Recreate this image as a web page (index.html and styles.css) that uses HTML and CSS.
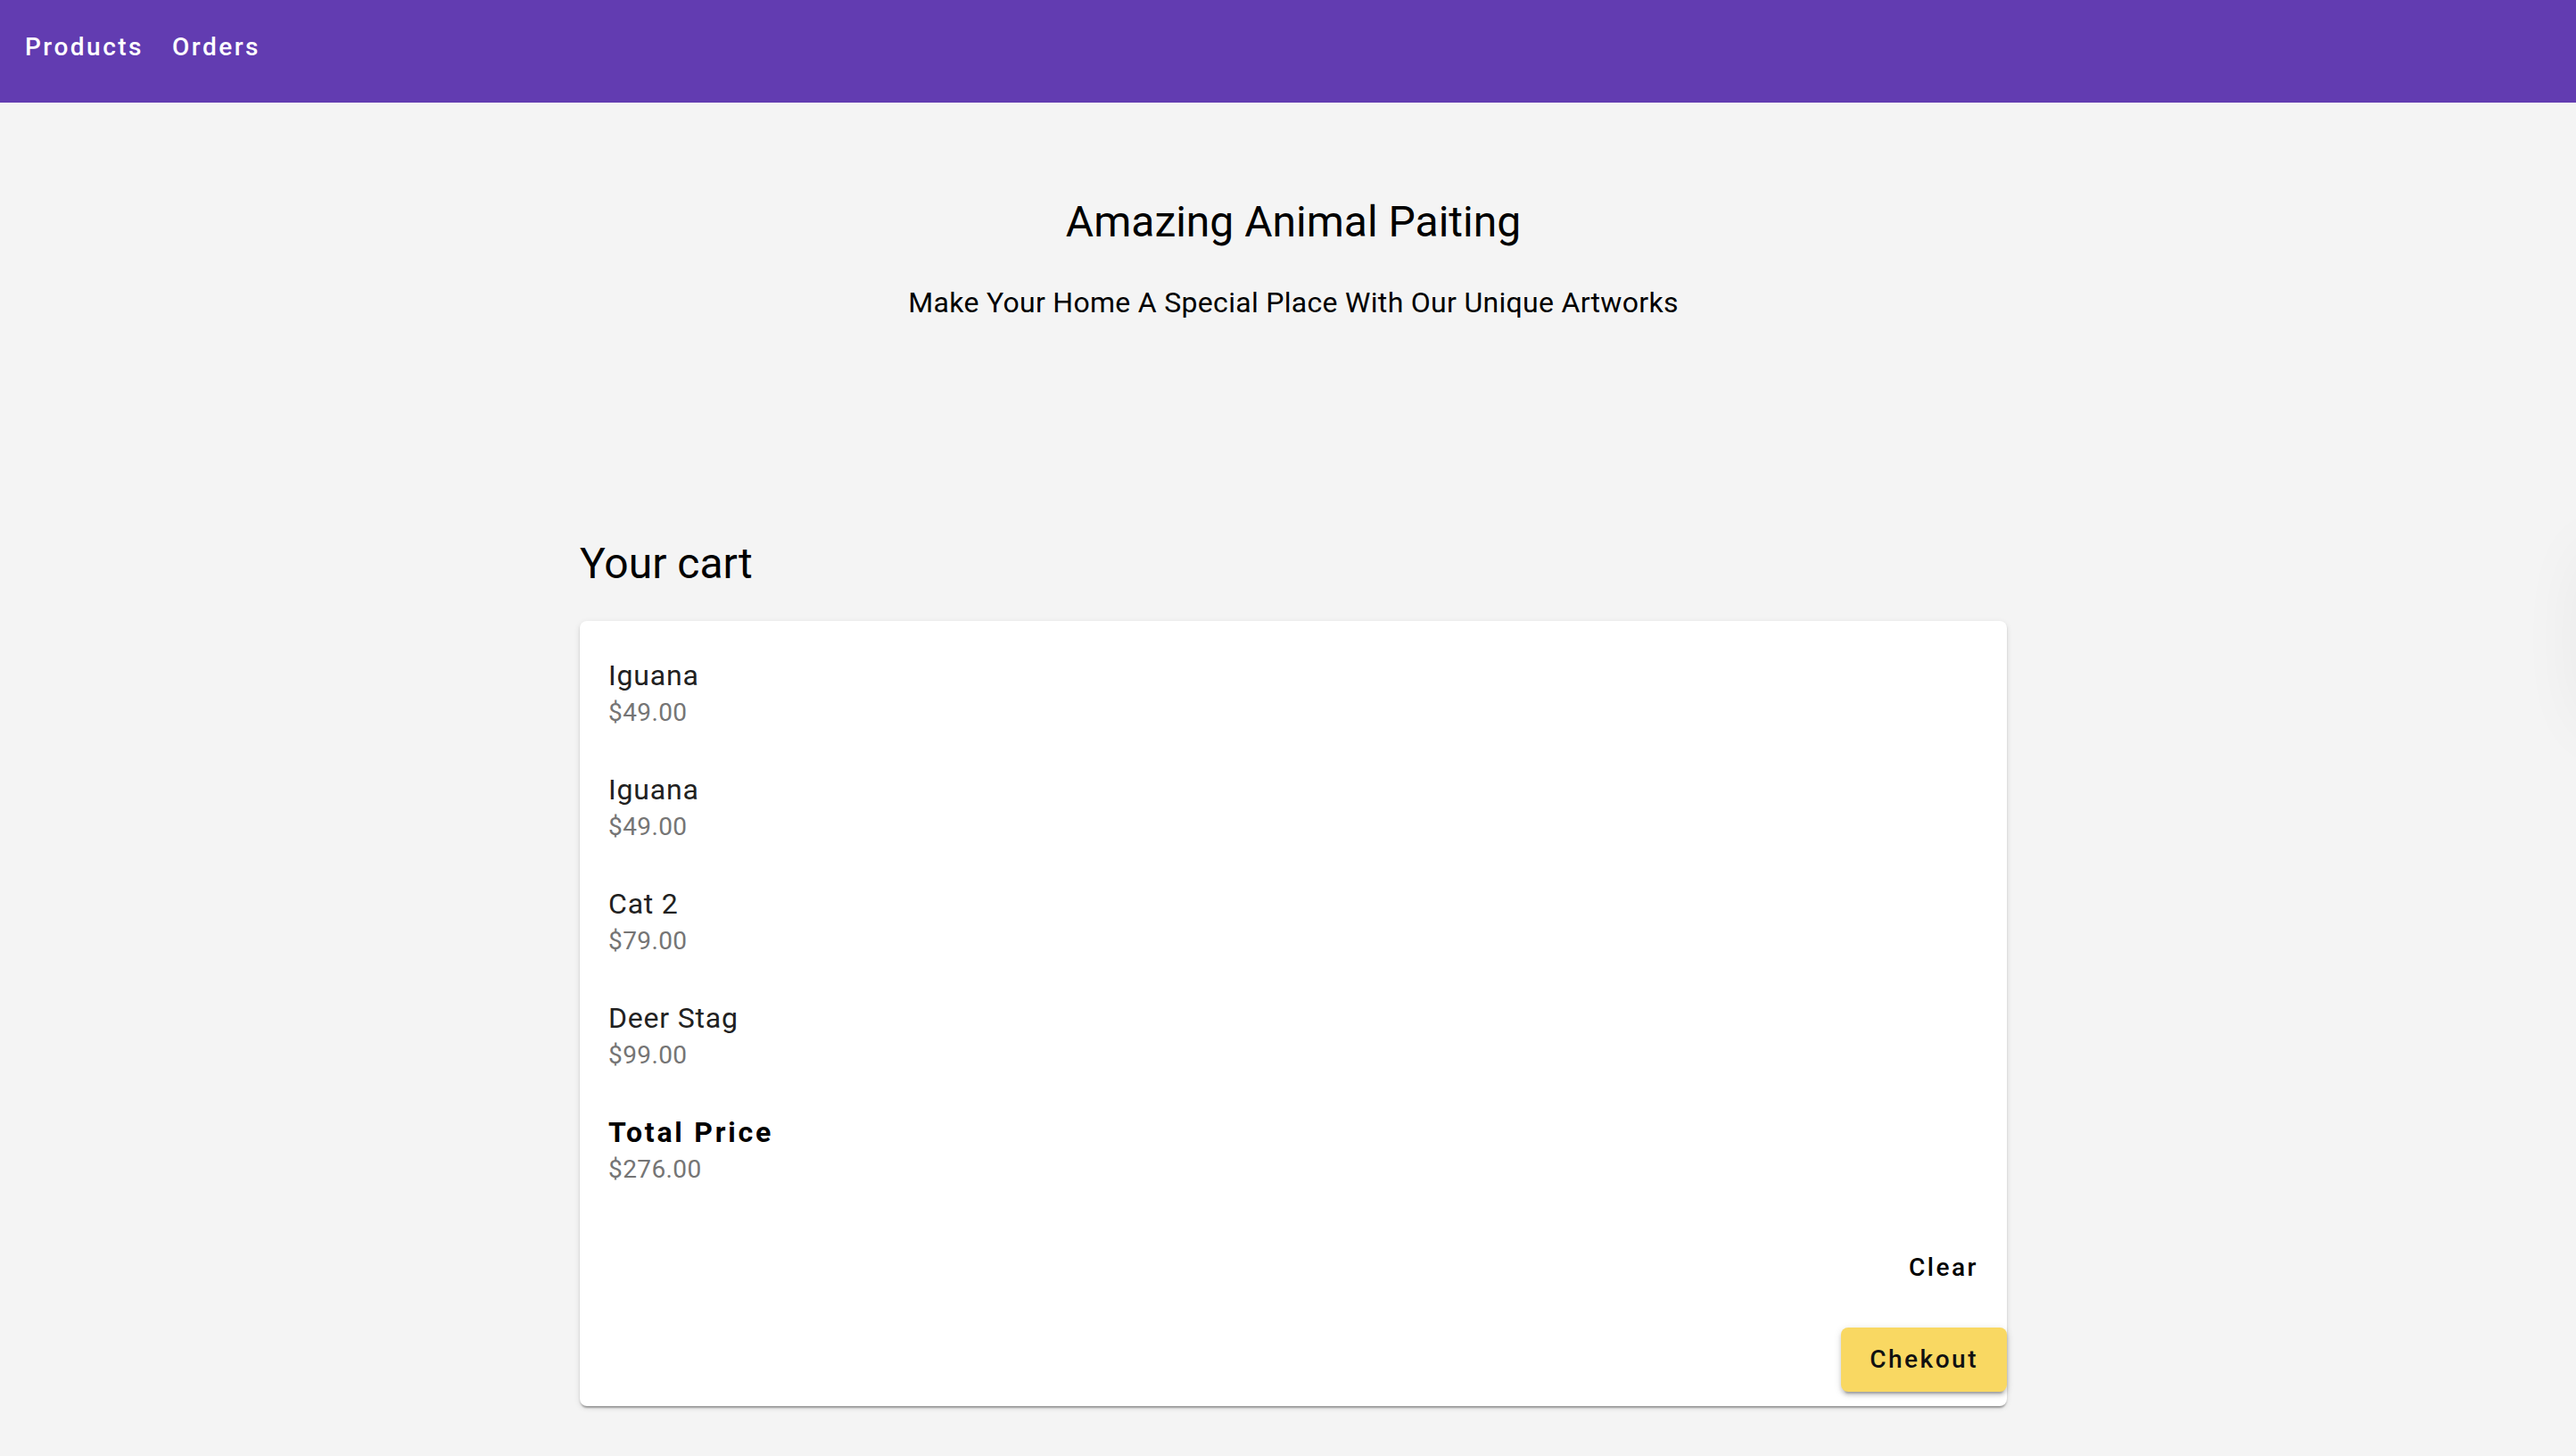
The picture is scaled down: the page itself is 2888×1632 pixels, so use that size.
FILE: index.html
```html
<!DOCTYPE html>
<html lang="en">
<head>
<meta charset="utf-8">
<title>Amazing Animal Paiting</title>
<link rel="stylesheet" href="styles.css">
</head>
<body>
  <header class="appbar">
    <nav class="nav">
      <a class="nav-btn" href="#">Products</a>
      <a class="nav-btn" href="#">Orders</a>
    </nav>
  </header>
  <main class="main">
    <section class="hero">
      <h1 class="hero-title">Amazing Animal Paiting</h1>
      <p class="hero-sub">Make Your Home A Special Place With Our Unique Artworks</p>
    </section>
    <section class="cart">
      <h2 class="cart-title">Your cart</h2>
      <div class="card">
        <ul class="items">
          <li class="item"><span class="item-name">Iguana</span><span class="item-price">$49.00</span></li>
          <li class="item"><span class="item-name">Iguana</span><span class="item-price">$49.00</span></li>
          <li class="item"><span class="item-name">Cat 2</span><span class="item-price">$79.00</span></li>
          <li class="item"><span class="item-name">Deer Stag</span><span class="item-price">$99.00</span></li>
          <li class="item"><span class="item-name total">Total Price</span><span class="item-price">$276.00</span></li>
        </ul>
        <div class="actions">
          <button class="btn btn-text">Clear</button>
          <button class="btn btn-primary">Chekout</button>
        </div>
      </div>
    </section>
  </main>
  <div class="edge-shadow"></div>
</body>
</html>
```

FILE: styles.css
```css
* { box-sizing: border-box; }
html, body { margin: 0; padding: 0; }
body {
  background: #f4f4f4;
  font-family: Roboto, "Liberation Sans", Arial, sans-serif;
  color: #000;
  min-height: 1632px;
  overflow: hidden;
}
.appbar {
  height: 115px;
  background: #623cb1;
  display: flex;
  align-items: center;
  padding: 0 0 9px 12px;
}
.nav { display: flex; gap: 0; }
.nav-btn {
  color: #fff;
  text-decoration: none;
  font-size: 28px;
  font-weight: 500;
  letter-spacing: 2.5px;
  line-height: 48px;
  padding: 0 16px;
}
.main {
  padding-left: 12px;
  display: flex;
  flex-direction: column;
  align-items: center;
}
.hero { padding-top: 102px; text-align: center; }
.hero-title {
  margin: 0;
  font-size: 48px;
  font-weight: 400;
  line-height: 64px;
}
.hero-sub {
  margin: 34px 0 0;
  font-size: 32px;
  line-height: 48px;
  letter-spacing: 0.3px;
}
.cart { width: 1600px; margin-top: 237px; }
.cart-title {
  margin: 0;
  font-size: 48px;
  font-weight: 400;
  line-height: 64px;
}
.card {
  margin-top: 32px;
  background: #fff;
  border-radius: 8px;
  box-shadow: 0 4px 2px -2px rgba(0,0,0,0.2), 0 2px 2px 0 rgba(0,0,0,0.14), 0 2px 6px 0 rgba(0,0,0,0.12);
  padding: 37px 0 16px 32px;
}
.items {
  list-style: none;
  margin: 0;
  padding: 0;
  display: flex;
  flex-direction: column;
  gap: 44px;
}
.item { display: flex; flex-direction: column; }
.item-name {
  font-size: 32px;
  line-height: 48px;
  color: #212121;
  letter-spacing: 0.8px;
}
.item-name.total {
  font-weight: 700;
  color: #000;
  letter-spacing: 2.8px;
}
.item-price {
  font-size: 28px;
  line-height: 36px;
  color: #757575;
  letter-spacing: 0.4px;
}
.actions {
  margin-top: 56px;
  display: flex;
  flex-direction: column;
  align-items: flex-end;
  gap: 31px;
}
.btn {
  font-family: Roboto, "Liberation Sans", Arial, sans-serif;
  font-size: 28px;
  font-weight: 500;
  letter-spacing: 2.5px;
  line-height: 48px;
  padding: 12px 32px;
  border: none;
  border-radius: 8px;
  background: transparent;
  color: #000;
  cursor: pointer;
}
.btn-primary {
  background: #f9d862;
  color: #111;
  box-shadow: 0 6px 2px -4px rgba(0,0,0,0.2), 0 4px 4px 0 rgba(0,0,0,0.14), 0 2px 10px 0 rgba(0,0,0,0.12);
}
.edge-shadow {
  position: fixed;
  right: -60px;
  top: 600px;
  width: 60px;
  height: 230px;
  border-radius: 50%;
  box-shadow: 0 0 70px rgba(0,0,0,0.05);
}
```
